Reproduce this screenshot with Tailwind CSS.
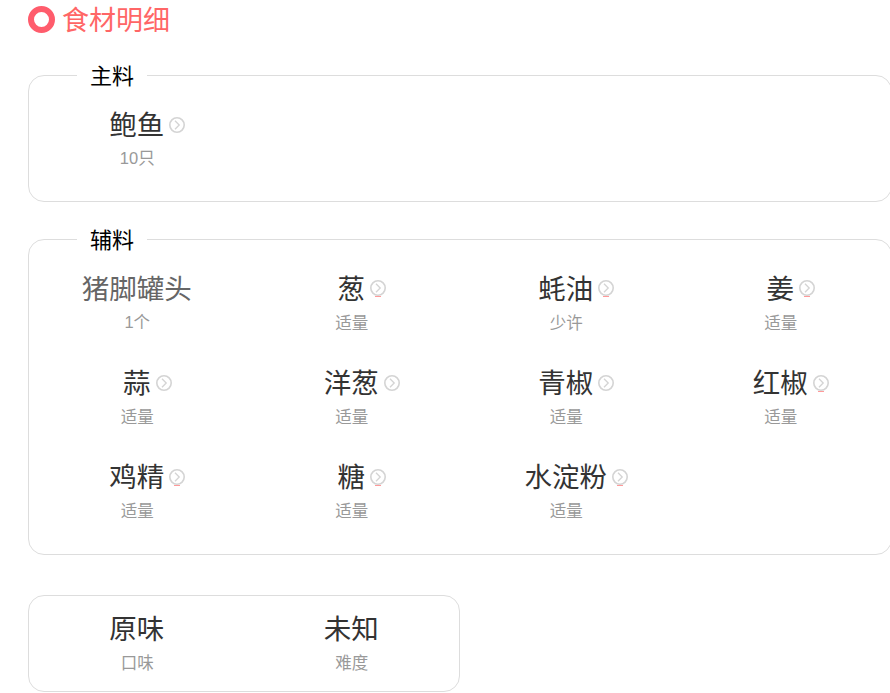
<!DOCTYPE html>
<html lang="zh">

<head>
  <meta charset="UTF-8">
  <title>食材明细</title>
  <script src="https://cdn.jsdelivr.net/npm/@tailwindcss/browser@4"></script>
</head>

<body class="bg-white font-['Liberation_Sans','Noto_Sans_CJK_SC',sans-serif] overflow-hidden h-[693px]">

  <div class="pl-[28px] w-[890px]">
    <!-- Title -->
    <div class="flex items-center h-[39px] gap-[7px]">
      <span class="w-[27px] h-[27px] rounded-full border-[6.5px] border-[#ff5c6c] bg-white"></span>
      <h2 class="text-[27px] leading-[42px] pt-[2px] text-[#ff6666]">食材明细</h2>
    </div>

    <!-- 主料 -->
    <div class="relative mt-[36px] w-[864px] h-[127px] border border-[#dddddd] rounded-[16px] px-px">
      <span class="absolute left-[48px] -top-[11px] px-[13px] bg-white text-[22px] leading-[24px] text-black">主料</span>
      <div class="grid grid-cols-[repeat(4,214.5px)]">
        <div class="h-[94px] flex flex-col items-center pt-[30px]">
          <div class="relative mr-[1px] text-[27.5px] leading-[40px] text-[#333333]">鲍鱼
            <svg class="absolute left-full top-[11px] ml-[5px] w-[16px] h-[16px]" viewBox="0 0 16 16" fill="none" stroke="#d4d4d4"><circle cx="8" cy="8" r="7.2" stroke-width="1.6"/><path d="M6 3.8 10.2 8 6 12.2" stroke-width="1.3"/></svg>
          </div>
          <div class="text-[16.5px] leading-[24px] text-[#999999]">10只</div>
        </div>
      </div>
    </div>

    <!-- 辅料 -->
    <div class="relative mt-[37px] w-[864px] h-[316px] border border-[#dddddd] rounded-[16px] px-px">
      <span class="absolute left-[48px] -top-[11px] px-[13px] bg-white text-[22px] leading-[24px] text-black">辅料</span>
      <div class="grid grid-cols-[repeat(4,214.5px)]">
        <div class="h-[94px] flex flex-col items-center pt-[30px]">
          <div class="mr-[1px] text-[27.5px] leading-[40px] text-[#666666]">猪脚罐头</div>
          <div class="text-[16.5px] leading-[24px] text-[#999999]">1个</div>
        </div>
        <div class="h-[94px] flex flex-col items-center pt-[30px]">
          <div class="relative mr-[1px] text-[27.5px] leading-[40px] text-[#333333]">葱
            <svg class="absolute left-full top-[10px] ml-[5px] w-[16px] h-[18px]" viewBox="0 0 16 18" fill="none" stroke="#d4d4d4"><circle cx="8" cy="8" r="7.2" stroke-width="1.6"/><path d="M6 3.8 10.2 8 6 12.2" stroke-width="1.3"/><path d="M5 16.5h6" stroke="#ff9a9a"/></svg>
          </div>
          <div class="mt-[1px] text-[16.5px] leading-[24px] text-[#999999]">适量</div>
        </div>
        <div class="h-[94px] flex flex-col items-center pt-[30px]">
          <div class="relative mr-[1px] text-[27.5px] leading-[40px] text-[#333333]">蚝油
            <svg class="absolute left-full top-[10px] ml-[5px] w-[16px] h-[18px]" viewBox="0 0 16 18" fill="none" stroke="#d4d4d4"><circle cx="8" cy="8" r="7.2" stroke-width="1.6"/><path d="M6 3.8 10.2 8 6 12.2" stroke-width="1.3"/><path d="M5 16.5h6" stroke="#ff9a9a"/></svg>
          </div>
          <div class="mt-[1px] text-[16.5px] leading-[24px] text-[#999999]">少许</div>
        </div>
        <div class="h-[94px] flex flex-col items-center pt-[30px]">
          <div class="relative mr-[1px] text-[27.5px] leading-[40px] text-[#333333]">姜
            <svg class="absolute left-full top-[10px] ml-[5px] w-[16px] h-[18px]" viewBox="0 0 16 18" fill="none" stroke="#d4d4d4"><circle cx="8" cy="8" r="7.2" stroke-width="1.6"/><path d="M6 3.8 10.2 8 6 12.2" stroke-width="1.3"/><path d="M5 16.5h6" stroke="#ff9a9a"/></svg>
          </div>
          <div class="mt-[1px] text-[16.5px] leading-[24px] text-[#999999]">适量</div>
        </div>
        <div class="h-[94px] flex flex-col items-center pt-[30px]">
          <div class="relative mr-[1px] text-[27.5px] leading-[40px] text-[#333333]">蒜
            <svg class="absolute left-full top-[11px] ml-[5px] w-[16px] h-[16px]" viewBox="0 0 16 16" fill="none" stroke="#d4d4d4"><circle cx="8" cy="8" r="7.2" stroke-width="1.6"/><path d="M6 3.8 10.2 8 6 12.2" stroke-width="1.3"/></svg>
          </div>
          <div class="mt-[1px] text-[16.5px] leading-[24px] text-[#999999]">适量</div>
        </div>
        <div class="h-[94px] flex flex-col items-center pt-[30px]">
          <div class="relative mr-[1px] text-[27.5px] leading-[40px] text-[#333333]">洋葱
            <svg class="absolute left-full top-[11px] ml-[5px] w-[16px] h-[16px]" viewBox="0 0 16 16" fill="none" stroke="#d4d4d4"><circle cx="8" cy="8" r="7.2" stroke-width="1.6"/><path d="M6 3.8 10.2 8 6 12.2" stroke-width="1.3"/></svg>
          </div>
          <div class="mt-[1px] text-[16.5px] leading-[24px] text-[#999999]">适量</div>
        </div>
        <div class="h-[94px] flex flex-col items-center pt-[30px]">
          <div class="relative mr-[1px] text-[27.5px] leading-[40px] text-[#333333]">青椒
            <svg class="absolute left-full top-[11px] ml-[5px] w-[16px] h-[16px]" viewBox="0 0 16 16" fill="none" stroke="#d4d4d4"><circle cx="8" cy="8" r="7.2" stroke-width="1.6"/><path d="M6 3.8 10.2 8 6 12.2" stroke-width="1.3"/></svg>
          </div>
          <div class="mt-[1px] text-[16.5px] leading-[24px] text-[#999999]">适量</div>
        </div>
        <div class="h-[94px] flex flex-col items-center pt-[30px]">
          <div class="relative mr-[1px] text-[27.5px] leading-[40px] text-[#333333]">红椒
            <svg class="absolute left-full top-[11px] ml-[5px] w-[16px] h-[18px]" viewBox="0 0 16 18" fill="none" stroke="#d4d4d4"><circle cx="8" cy="8" r="7.2" stroke-width="1.6"/><path d="M6 3.8 10.2 8 6 12.2" stroke-width="1.3"/><path d="M5 16.5h6" stroke="#ff9a9a"/></svg>
          </div>
          <div class="mt-[1px] text-[16.5px] leading-[24px] text-[#999999]">适量</div>
        </div>
        <div class="h-[94px] flex flex-col items-center pt-[30px]">
          <div class="relative mr-[1px] text-[27.5px] leading-[40px] text-[#333333]">鸡精
            <svg class="absolute left-full top-[11px] ml-[5px] w-[16px] h-[18px]" viewBox="0 0 16 18" fill="none" stroke="#d4d4d4"><circle cx="8" cy="8" r="7.2" stroke-width="1.6"/><path d="M6 3.8 10.2 8 6 12.2" stroke-width="1.3"/><path d="M5 16.5h6" stroke="#ff9a9a"/></svg>
          </div>
          <div class="mt-[1px] text-[16.5px] leading-[24px] text-[#999999]">适量</div>
        </div>
        <div class="h-[94px] flex flex-col items-center pt-[30px]">
          <div class="relative mr-[1px] text-[27.5px] leading-[40px] text-[#333333]">糖
            <svg class="absolute left-full top-[11px] ml-[5px] w-[16px] h-[18px]" viewBox="0 0 16 18" fill="none" stroke="#d4d4d4"><circle cx="8" cy="8" r="7.2" stroke-width="1.6"/><path d="M6 3.8 10.2 8 6 12.2" stroke-width="1.3"/><path d="M5 16.5h6" stroke="#ff9a9a"/></svg>
          </div>
          <div class="mt-[1px] text-[16.5px] leading-[24px] text-[#999999]">适量</div>
        </div>
        <div class="h-[94px] flex flex-col items-center pt-[30px]">
          <div class="relative mr-[1px] text-[27.5px] leading-[40px] text-[#333333]">水淀粉
            <svg class="absolute left-full top-[11px] ml-[5px] w-[16px] h-[18px]" viewBox="0 0 16 18" fill="none" stroke="#d4d4d4"><circle cx="8" cy="8" r="7.2" stroke-width="1.6"/><path d="M6 3.8 10.2 8 6 12.2" stroke-width="1.3"/><path d="M5 16.5h6" stroke="#ff9a9a"/></svg>
          </div>
          <div class="mt-[1px] text-[16.5px] leading-[24px] text-[#999999]">适量</div>
        </div>
      </div>
    </div>

    <!-- 口味 / 难度 -->
    <div class="mt-[40px] w-[432px] h-[97px] border border-[#dddddd] rounded-[16px] px-px">
      <div class="grid grid-cols-[repeat(2,214.5px)]">
        <div class="h-[94px] flex flex-col items-center pt-[14px]">
          <div class="mr-[1px] text-[27.5px] leading-[40px] text-[#333333]">原味</div>
          <div class="mt-[1px] text-[16.5px] leading-[24px] text-[#999999]">口味</div>
        </div>
        <div class="h-[94px] flex flex-col items-center pt-[14px]">
          <div class="mr-[1px] text-[27.5px] leading-[40px] text-[#333333]">未知</div>
          <div class="mt-[1px] text-[16.5px] leading-[24px] text-[#999999]">难度</div>
        </div>
      </div>
    </div>
  </div>

</body>

</html>
